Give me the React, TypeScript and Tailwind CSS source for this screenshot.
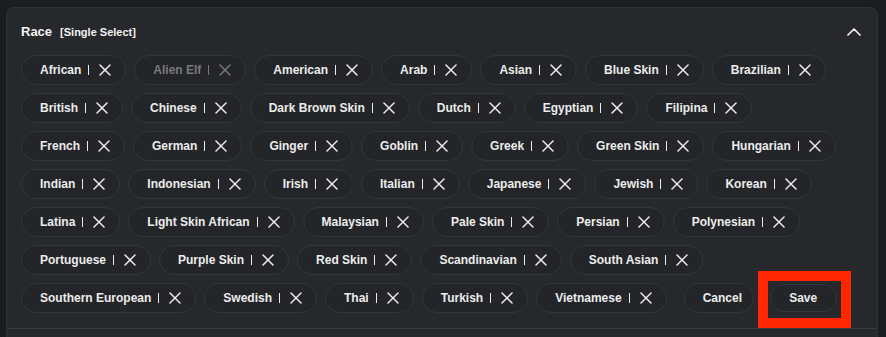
import React from 'react'

const rows: string[][] = [
  ['African', 'Alien Elf', 'American', 'Arab', 'Asian', 'Blue Skin', 'Brazilian'],
  ['British', 'Chinese', 'Dark Brown Skin', 'Dutch', 'Egyptian', 'Filipina'],
  ['French', 'German', 'Ginger', 'Goblin', 'Greek', 'Green Skin', 'Hungarian'],
  ['Indian', 'Indonesian', 'Irish', 'Italian', 'Japanese', 'Jewish', 'Korean'],
  ['Latina', 'Light Skin African', 'Malaysian', 'Pale Skin', 'Persian', 'Polynesian'],
  ['Portuguese', 'Purple Skin', 'Red Skin', 'Scandinavian', 'South Asian'],
  ['Southern European', 'Swedish', 'Thai', 'Turkish', 'Vietnamese'],
]

function XIcon() {
  return (
    <svg width="12" height="12" viewBox="0 0 12 12" fill="none" stroke="currentColor" strokeWidth="1.5" strokeLinecap="round">
      <line x1="1" y1="1" x2="11" y2="11" />
      <line x1="11" y1="1" x2="1" y2="11" />
    </svg>
  )
}

function Chip({ label, disabled }: { label: string; disabled?: boolean }) {
  return (
    <div
      className={`flex h-[30px] items-center rounded-full border border-[#30353e] bg-[#242529] pl-[18px] pr-[14px] text-[12px] font-bold ${
        disabled ? 'text-[#77787c]' : 'text-[#ececec]'
      }`}
    >
      <span>{label}</span>
      <span className={`ml-[7px] mr-[10px] h-[10px] w-px ${disabled ? 'bg-[#77787c]' : 'bg-[#ececec]'}`} />
      <XIcon />
    </div>
  )
}

export default function App() {
  return (
    <div
      className="h-[337px] w-[886px] overflow-hidden bg-[#1c1d21] pl-[6px] pr-[8px] pt-[7px]"
      style={{ fontFamily: '"Liberation Sans", Arial, sans-serif' }}
    >
      <div className="h-[340px] rounded-t-[8px] border border-[#303136] bg-[#27282c]">
        {/* header */}
        <div className="mb-[14px] mt-[15px] flex h-[18px] items-center justify-between pl-[14px] pr-[16px]">
          <div className="flex items-baseline text-[#f2f2f2]">
            <span className="text-[13px] font-bold">Race</span>
            <span className="ml-[8px] text-[11px] font-bold">[Single Select]</span>
          </div>
          <svg width="14" height="8" viewBox="0 0 14 8" fill="none" stroke="#f0f0f0" strokeWidth="1.7" strokeLinecap="round" strokeLinejoin="round">
            <polyline points="1,7 7,1 13,7" />
          </svg>
        </div>

        {/* chips */}
        <div className="flex flex-col gap-[8px] px-[14px]">
          {rows.map((row, i) => (
            <div key={i} className="flex gap-[8px]">
              {row.map((r) => (
                <Chip key={r} label={r} disabled={r === 'Alien Elf'} />
              ))}
              {i === rows.length - 1 && (
                <>
                  <div className="ml-[9px] flex h-[30px] w-[70px] items-center rounded-full border border-[#30353e] bg-[#242529] pl-[18px] text-[12px] font-bold text-[#ececec]">
                    Cancel
                  </div>
                  <div className="relative ml-[8px] flex h-[30px] items-center">
                    <div className="flex h-[28px] w-[67px] items-center justify-center rounded-full border border-[#30353e] bg-[#242529] text-[12px] font-bold text-[#ececec]">
                      Save
                    </div>
                    <div className="pointer-events-none absolute -bottom-[15px] -left-[12px] -right-[14px] -top-[12px] border-[10px] border-[#ff2600]" />
                  </div>
                </>
              )}
            </div>
          ))}
        </div>

        {/* footer divider */}
        <div className="mt-[15px] h-px bg-[#38393e]" />
      </div>
    </div>
  )
}
